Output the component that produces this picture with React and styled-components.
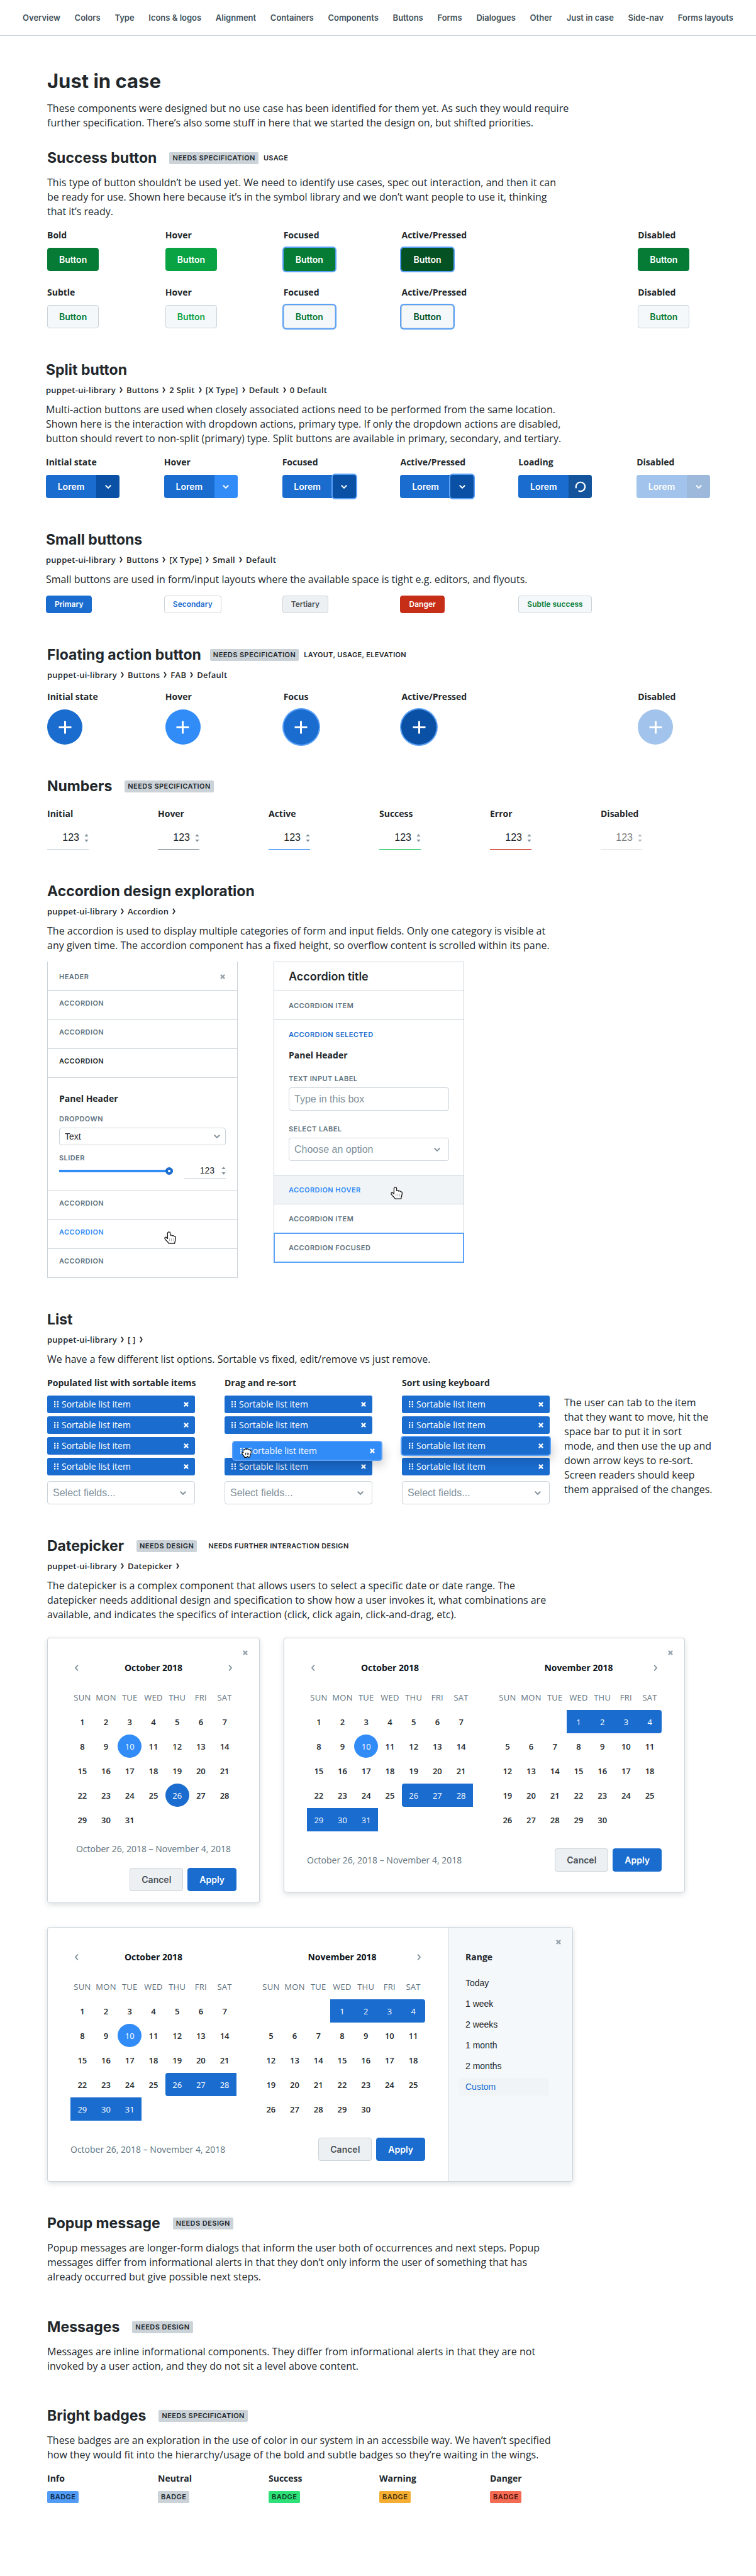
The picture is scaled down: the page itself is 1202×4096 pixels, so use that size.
import React from "react";
import styled, { createGlobalStyle, css } from "styled-components";

const c = {
  ink: "#22272b",
  nav: "#40505a",
  slate: "#5e727e",
  muted: "#81919c",
  line: "#cbd3d9",
  lineDark: "#aeb9c2",
  mist: "#f4f8fb",
  fog: "#ecf0f3",
  hover: "#f0f4f7",
  blue: "#1a6ccf",
  blueLight: "#318cf7",
  blueDark: "#0a50a4",
  ring: "#5aa1f7",
  green: "#067b36",
  greenLight: "#0aa344",
  greenDark: "#045123",
  red: "#c72e18",
};

const heading = `Inter, "Liberation Sans", sans-serif`;
const body = `"Open Sans", "Noto Sans", sans-serif`;
const field = `"Liberation Sans", Arial, sans-serif`;

const GlobalStyle = createGlobalStyle`
  *, *::before, *::after { box-sizing: border-box; }
  body { margin: 0; background: #fff; color: ${c.ink}; font-family: ${body}; }
  h1, h2, h3, p, ul, ol { margin: 0; padding: 0; }
  ul, ol { list-style: none; }
  button, input, select { margin: 0; font: inherit; color: inherit; }
`;

/* ---------- page frame ---------- */

const Nav = styled.nav`
  display: flex;
  align-items: center;
  justify-content: space-between;
  height: 57px;
  padding: 0 36px;
  border-bottom: 1px solid ${c.line};
`;

const NavLink = styled.a`
  font: 600 13px/20px ${heading};
  color: ${c.nav};
  text-decoration: none;
  white-space: nowrap;
`;

const Main = styled.main`
  display: flex;
  flex-direction: column;
  gap: 52px;
  padding: 52px 0 118px;
`;

const Section = styled.section`
  padding-left: ${(p) => (p.$outdent ? 73 : 75)}px;
  padding-right: ${(p) => (p.$outdent ? 2 : 0)}px;
`;

const PageTitle = styled.h1`
  font: 700 31px/40px ${heading};
  margin-bottom: 12px;
`;

const Title = styled.h2`
  font: 700 23px/28px ${heading};
  white-space: nowrap;
`;

const TitleRow = styled.div`
  display: flex;
  align-items: center;
  gap: ${(p) => (p.$tight ? 14 : 20)}px;
`;

const Tags = styled.div`
  display: flex;
  align-items: center;
  gap: ${(p) => (p.$wide ? 18 : 8)}px;
`;

const Badge = styled.span`
  display: inline-block;
  padding: 0 5px;
  border-radius: 2px;
  background: ${(p) => p.$bg || c.line};
  color: ${(p) => p.$fg || c.ink};
  font: 600 11px/19px ${heading};
  letter-spacing: 0.04em;
  white-space: nowrap;
`;

const TagNote = styled.span`
  font: 600 11px/19px ${heading};
  letter-spacing: 0.03em;
`;

const Crumbs = styled.p`
  display: flex;
  align-items: center;
  gap: 6px;
  margin-top: 9px;
  font: 600 13px/18px ${body};
  letter-spacing: 0.02em;
`;

const Copy = styled.p`
  max-width: ${(p) => p.$width || 816}px;
  margin-top: ${(p) => p.$top ?? 11}px;
  margin-bottom: ${(p) => p.$bottom ?? 0}px;
  font-size: 16px;
  line-height: 23px;
`;

const States = styled.div`
  display: grid;
  grid-template-columns: repeat(6, ${(p) => (p.$compact ? "176px" : "1fr")});
  margin-top: ${(p) => p.$top ?? 16}px;
`;

const State = styled.div`
  display: flex;
  flex-direction: column;
  align-items: flex-start;
  gap: 10px;
  grid-column-start: ${(p) => p.$col || "auto"};
`;

const Label = styled.h3`
  font: 700 14px/20px ${body};
  white-space: nowrap;
`;

/* ---------- buttons ---------- */

const focusRing = css`
  box-shadow: 0 0 0 2px ${c.ring};
`;

const Button = styled.button`
  height: 37px;
  padding: 0 18px;
  border: 1px solid ${(p) => p.$border || p.$bg};
  border-radius: 4px;
  background: ${(p) => p.$bg};
  color: ${(p) => p.$fg || "#fff"};
  font: 600 14px/20px ${heading};
  ${(p) => p.$ring && focusRing}
`;

const SmallButton = styled(Button)`
  height: 28px;
  padding: 0 13px;
  font-size: 12px;
  line-height: 16px;
`;

const Split = styled.div`
  display: flex;
  width: 117px;
  height: 37px;
  opacity: ${(p) => (p.$dim ? 0.4 : 1)};
`;

const SplitMain = styled.button`
  flex: 1;
  padding: 0;
  border: 0;
  border-radius: 4px 0 0 4px;
  background: ${c.blue};
  color: #fff;
  font: 600 14px/20px ${heading};
`;

const SplitMore = styled.button`
  display: grid;
  place-items: center;
  width: 37px;
  padding: 0;
  border: 0;
  border-radius: ${(p) => (p.$ring ? "4px" : "0 4px 4px 0")};
  background: ${(p) => p.$bg || c.blueDark};
  color: #fff;
  ${(p) => p.$ring && focusRing}
`;

const Fab = styled.button`
  display: grid;
  place-items: center;
  width: 56px;
  height: 56px;
  padding: 0;
  border: 0;
  border-radius: 50%;
  background: ${(p) => p.$bg};
  color: #fff;
  opacity: ${(p) => (p.$dim ? 0.4 : 1)};
  ${(p) => p.$ring && focusRing}
`;

/* ---------- icons ---------- */

const Svg = styled.svg`
  display: block;
  flex: none;
`;

const ChevronDown = () => (
  <Svg width="10" height="10" viewBox="0 0 10 10" fill="none" stroke="currentColor" strokeWidth="2" strokeLinecap="round" aria-hidden="true">
    <path d="M1.3 3.2 5 6.900l3.700-3.700" />
  </Svg>
);

const ChevronSide = ({ flip }) => (
  <Svg width="7" height="10" viewBox="0 0 7 10" fill="none" stroke="currentColor" strokeWidth="1.800" strokeLinecap="round" aria-hidden="true">
    <path d={flip ? "M5.4 1.2 2 5l3.4 3.8" : "M1.6 1.2 5 5 1.6 8.8"} />
  </Svg>
);

const CrumbArrow = () => (
  <Svg width="5" height="10" viewBox="0 0 5 10" fill="none" stroke="currentColor" strokeWidth="1.800" aria-hidden="true">
    <path d="M1 0.800 3.800 5 1 9.200" />
  </Svg>
);

const Cross = () => (
  <Svg width="8" height="8" viewBox="0 0 8 8" fill="none" stroke="currentColor" strokeWidth="2.200" aria-hidden="true">
    <path d="M.9.9l6.200 6.200M7.100.9.9 7.100" />
  </Svg>
);

const Plus = () => (
  <Svg width="21" height="21" viewBox="0 0 21 21" fill="none" stroke="currentColor" strokeWidth="3" aria-hidden="true">
    <path d="M10.5 0.5v20M0.5 10.5h20" />
  </Svg>
);

const Spinner = () => (
  <Svg width="18" height="18" viewBox="0 0 18 18" fill="none" stroke="currentColor" strokeWidth="2.200" strokeLinecap="round" aria-hidden="true">
    <path d="M1.9 10.400A7.200 7.200 0 1 1 6.400 15.700" />
  </Svg>
);

const Grip = () => (
  <Svg width="7" height="10" viewBox="0 0 7 10" fill="currentColor" aria-hidden="true">
    {[0, 3.6, 7.2].map((y) => (
      <React.Fragment key={y}>
        <rect x="0" y={y} width="2.3" height="2.3" />
        <rect x="4.7" y={y} width="2.3" height="2.3" />
      </React.Fragment>
    ))}
  </Svg>
);

const Hand = () => (
  <Svg width="19" height="20" viewBox="0 0 19 20" fill="#fff" stroke="#16181a" strokeWidth="1.300" strokeLinejoin="round" aria-hidden="true">
    <path d="M5.400 11.400V3c0-2.800 4.200-2.800 4.200 0v3.200c1.400-.8 3-.2 3.200.8 1.400-.6 2.800-.2 3.200 1 1.400-.2 2.400.4 2.400 1.800 0 3-1.200 5.800-1.800 9.400H7.400C6 16.200 1 13.400.9 10.800c0-1.800 2.200-2.200 3.200-.6z" />
    <path d="M8.600 11.200v4.200M11.600 11.200v4.200M14.600 11.200v4.200" stroke="#777" strokeWidth=".6" fill="none" />
  </Svg>
);

const GrabHand = () => (
  <Svg width="16" height="15" viewBox="0 0 16 15" fill="#fff" stroke="#111" strokeWidth="1.200" strokeLinejoin="round" aria-hidden="true">
    <path d="M2.800 6.400C2 3.800 2.200 2 3.800 2c.6 0 1 .2 1.200.8C5 .6 7.600.2 8 1.800c.6-1.400 3-1.200 3 .6 1-.8 2.600-.2 2.600 1.200 1.200-.4 1.800.4 1.800 1.800 0 2.800-1.800 4.800-2.200 8.400l-2.400.4-1.200-1.600-1.200 1.800H4.800c-.2-2-1.600-2.800-2.800-4.400C.2 8 .2 6.200 2.800 6.400z" />
    <path d="M6.600 6.800v3.800M9.200 6.800v3.800M11.600 6.800v3.800" strokeWidth=".9" fill="none" />
  </Svg>
);

const Steppers = () => (
  <Svg width="7" height="13" viewBox="0 0 7 13" fill={c.muted} aria-hidden="true">
    <path d="M3.500 0.300 6.700 4H.3zM3.500 12.700 6.700 9H.3z" />
  </Svg>
);

/* ---------- numbers ---------- */

const NumberBox = styled.label`
  display: flex;
  align-items: center;
  justify-content: flex-end;
  gap: ${(p) => (p.$short ? 11 : 8)}px;
  width: 66px;
  height: ${(p) => (p.$short ? 25 : 37)}px;
  border-bottom: 1px solid ${(p) => p.$line || c.line};
  opacity: ${(p) => (p.$dim ? 0.6 : 1)};
`;

const NumberInput = styled.input`
  width: 40px;
  padding: 0;
  border: 0;
  background: transparent;
  text-align: right;
  font: ${(p) => (p.$short ? 14 : 16)}px/20px ${field};
`;

const Num = ({ name, line, dim, short }) => (
  <NumberBox $line={line} $dim={dim} $short={short}>
    <NumberInput type="text" inputMode="numeric" defaultValue="123" aria-label={name} disabled={dim} $short={short} />
    <Steppers />
  </NumberBox>
);

/* ---------- form fields ---------- */

const SelectWrap = styled.div`
  display: grid;
  grid-template-columns: 1fr 10px;
  align-items: center;
  width: 100%;
  height: ${(p) => (p.$short ? 28 : 37)}px;
  padding-right: ${(p) => (p.$short ? 8 : 13)}px;
  border: 1px solid ${c.line};
  border-radius: 4px;
  color: ${c.muted};
  background: #fff;

  svg { grid-area: 1 / 2; pointer-events: none; }
`;

const Select = styled.select`
  grid-area: 1 / 1 / 2 / 3;
  width: 100%;
  height: 100%;
  padding: 0 8px;
  border: 0;
  appearance: none;
  background: transparent;
  color: ${(p) => (p.$short ? c.ink : c.muted)};
  font: ${(p) => (p.$short ? 14 : 16)}px/20px ${field};
`;

const SelectField = ({ id, name, text, short }) => (
  <SelectWrap $short={short}>
    <Select id={id} aria-label={name} $short={short}>
      <option>{text}</option>
    </Select>
    <ChevronDown />
  </SelectWrap>
);

const TextInput = styled.input`
  width: 100%;
  height: 37px;
  padding: 0 8px;
  border: 1px solid ${c.line};
  border-radius: 4px;
  font: 16px/20px ${field};
  &::placeholder { color: ${c.muted}; opacity: 1; }
`;

const capsText = css`
  font: 600 11px/16px ${heading};
  letter-spacing: 0.04em;
`;

const FieldLabel = styled.label`
  display: block;
  margin-top: ${(p) => p.$top}px;
  margin-bottom: ${(p) => p.$bottom}px;
  color: ${c.slate};
  ${capsText}
`;

/* ---------- accordion ---------- */

const Accordions = styled.div`
  display: flex;
  align-items: flex-start;
  gap: 57px;
  margin-top: 14px;
`;

const Accordion = styled.div`
  width: 303px;
  border: solid ${c.line};
  border-width: ${(p) => (p.$open ? "0 1px" : "1px 1px 0")};
`;

const AccHeader = styled.div`
  display: flex;
  align-items: center;
  justify-content: space-between;
  height: 47px;
  padding: 2px 19px 0 18px;
  border-bottom: 1px solid ${c.lineDark};
  color: ${c.slate};
  ${capsText}
`;

const AccTitle = styled.h3`
  height: 46px;
  padding-left: 23px;
  border-bottom: 1px solid ${c.line};
  font: 600 18px/46px ${heading};
`;

const AccRow = styled.button`
  position: relative;
  display: flex;
  align-items: center;
  width: 100%;
  height: 46px;
  padding: ${(p) => (p.$raised ? "0 18px 8px" : "0 23px")};
  border: 0;
  border-bottom: 1px solid ${c.line};
  background: ${(p) => p.$bg || "#fff"};
  color: ${(p) => p.$fg || c.slate};
  text-align: left;
  ${capsText}
  ${(p) => p.$plain && css`border-bottom: 0;`}
  ${(p) => p.$focus && css`border-bottom: 0; outline: 2px solid ${c.ring}; outline-offset: -1px;`}
`;

const Cursor = styled.span`
  position: absolute;
  left: 185px;
  top: 18px;
`;

const CloseButton = styled.button`
  display: grid;
  place-items: center;
  padding: 0;
  border: 0;
  background: none;
  color: #96a3ad;
`;

const PanelTitle = styled.h3`
  font: 700 14px/20px ${body};
`;

const LeftPanel = styled.div`
  height: 180px;
  padding: 23px 18px 0;
  border-bottom: 1px solid ${c.line};
`;

const RightPanel = styled.div`
  height: 201px;
  padding: 0 23px;
  border-bottom: 1px solid ${c.line};
`;

const SliderRow = styled.div`
  display: flex;
  align-items: center;
  justify-content: space-between;
`;

const Slider = styled.input`
  appearance: none;
  width: 181px;
  height: 12px;
  background: linear-gradient(${c.blueLight}, ${c.blueLight}) center / 100% 4px no-repeat;
  border-radius: 4px;

  &::-webkit-slider-thumb {
    appearance: none;
    width: 12px;
    height: 12px;
    border: 4px solid ${c.blue};
    border-radius: 50%;
    background: #fff;
  }
`;

/* ---------- sortable list ---------- */

const Lists = styled.div`
  display: grid;
  grid-template-columns: 282px 282px 258px 1fr;
  margin-top: 16px;
`;

const ListColumn = styled.div`
  width: 235px;
`;

const Items = styled.ul`
  display: flex;
  flex-direction: column;
  gap: 5px;
  margin: 10px 0 9px;
`;

const Item = styled.li`
  position: relative;
  display: flex;
  align-items: center;
  gap: 5px;
  height: 28px;
  padding: 0 10px 0 11px;
  border-radius: 3px;
  background: ${c.blue};
  color: #fff;
  font-size: 14px;
  line-height: 20px;
  ${(p) => p.$lifted && css`
    z-index: 1;
    box-shadow: 0 0 0 2px ${c.ring}, 4px 8px 16px rgba(0, 0, 0, 0.2);
  `}
  ${(p) => p.$dragged && css`
    left: 14px;
    top: 8px;
    background: ${c.blueLight};
  `}
`;

const ItemText = styled.span`
  flex: 1;
`;

const ItemRemove = styled(CloseButton)`
  color: #fff;
`;

const GrabCursor = styled.span`
  position: absolute;
  left: 13px;
  top: 10px;
`;

const SideNote = styled.p`
  max-width: 238px;
  padding-top: 30px;
  font-size: 16px;
  line-height: 23px;
`;

/* ---------- datepicker ---------- */

const Pickers = styled.div`
  display: flex;
  flex-wrap: wrap;
  align-items: flex-start;
  gap: 38px;
  margin-top: 25px;
`;

const Picker = styled.div`
  position: relative;
  display: flex;
  border: 1px solid ${c.line};
  border-radius: 4px;
  background: #fff;
  box-shadow: 0 3px 8px rgba(60, 80, 95, 0.18);
`;

const PickerBody = styled.div`
  padding: 37px 36px ${(p) => (p.$single ? 18 : 32)}px;
`;

const Months = styled.div`
  display: flex;
  gap: 36px;
`;

const Month = styled.div`
  width: 264px;
`;

const MonthBar = styled.div`
  display: grid;
  grid-template-columns: 20px 1fr 20px;
  align-items: center;
  height: 20px;
  padding: 0 6px;
`;

const MonthName = styled.h3`
  grid-column: 2;
  text-align: center;
  font: 700 14px/20px ${body};
  color: #0d141c;
`;

const MonthButton = styled(CloseButton)`
  grid-row: 1;
  grid-column: ${(p) => (p.$next ? 3 : 1)};
  justify-self: ${(p) => (p.$next ? "end" : "start")};
  color: ${c.muted};
`;

const Calendar = styled.table`
  width: 100%;
  margin-top: 25px;
  border-collapse: separate;
  border-spacing: 0 2px;
  table-layout: fixed;
`;

const Weekday = styled.th`
  height: 28px;
  padding: 0;
  vertical-align: top;
  font: 400 13px/20px ${body};
  letter-spacing: 0.02em;
  color: ${c.slate};
`;

const Day = styled.td`
  height: 37px;
  padding: 0;
  text-align: center;
  font: ${(p) => (p.$fill ? 400 : 600)} 13px/18px ${body};
  color: ${(p) => (p.$fill ? "#fff" : c.ink)};
  background: ${(p) => p.$fill || "transparent"};
  border-radius: ${(p) => p.$radius || "0"};
`;

const PickerFooter = styled.div`
  display: flex;
  flex-direction: ${(p) => (p.$single ? "column" : "row")};
  align-items: ${(p) => (p.$single ? "stretch" : "center")};
  justify-content: space-between;
  margin-top: ${(p) => (p.$single ? 16 : 25)}px;
`;

const RangeText = styled.p`
  font-size: 14px;
  line-height: 20px;
  text-align: ${(p) => (p.$single ? "center" : "left")};
  margin-bottom: ${(p) => (p.$single ? 20 : 0)}px;
  color: ${c.slate};
`;

const Actions = styled.div`
  display: flex;
  justify-content: flex-end;
  gap: 7px;
`;

const PickerClose = styled(CloseButton)`
  position: absolute;
  top: 19px;
  right: 18px;
`;

const RangeSide = styled.aside`
  width: 198px;
  padding: 37px 38px 0 17px;
  border-left: 1px solid ${c.line};
  border-radius: 0 4px 4px 0;
  background: ${c.mist};
`;

const RangeTitle = styled.h3`
  padding-left: 10px;
  margin-bottom: 17px;
  font: 700 14px/20px ${body};
`;

const RangeOption = styled.button`
  display: block;
  width: 100%;
  height: 28px;
  margin-bottom: 5px;
  padding: 0 10px;
  border: 0;
  background: ${(p) => (p.$on ? c.hover : "transparent")};
  color: ${(p) => (p.$on ? c.blue : c.ink)};
  text-align: left;
  font: 14px/20px ${field};
`;

/* ---------- data and composite parts ---------- */

const NAV = ["Overview", "Colors", "Type", "Icons & logos", "Alignment", "Containers", "Components", "Buttons", "Forms", "Dialogues", "Other", "Just in case", "Side-nav", "Forms layouts"];
const DAYS = ["SUN", "MON", "TUE", "WED", "THU", "FRI", "SAT"];

const Heading = ({ title, tag, note, tight, wide }) => (
  <TitleRow $tight={tight}>
    <Title>{title}</Title>
    {tag && (
      <Tags $wide={wide}>
        <Badge>{tag}</Badge>
        {note && <TagNote>{note}</TagNote>}
      </Tags>
    )}
  </TitleRow>
);

const Path = ({ parts, open }) => (
  <Crumbs>
    {parts.map((part, i) => (
      <React.Fragment key={part}>
        {i > 0 && <CrumbArrow />}
        <span>{part}</span>
      </React.Fragment>
    ))}
    {open && <CrumbArrow />}
  </Crumbs>
);

const weeks = (offset, count) => {
  const cells = [...Array(offset).fill(null), ...Array.from({ length: count }, (_, i) => i + 1)];
  while (cells.length < 35) cells.push(null);
  return [0, 1, 2, 3, 4].map((w) => cells.slice(w * 7, w * 7 + 7));
};

const MonthView = ({ name, offset, count, mark, prev, next }) => (
  <Month>
    <MonthBar>
      {prev && <MonthButton aria-label="Previous month"><ChevronSide flip /></MonthButton>}
      <MonthName>{name}</MonthName>
      {next && <MonthButton $next aria-label="Next month"><ChevronSide /></MonthButton>}
    </MonthBar>
    <Calendar>
      <thead>
        <tr>{DAYS.map((d) => <Weekday key={d} scope="col">{d}</Weekday>)}</tr>
      </thead>
      <tbody>
        {weeks(offset, count).map((week, w) => (
          <tr key={w}>
            {week.map((d, i) => {
              const m = d ? mark(d) : null;
              return <Day key={i} $fill={m?.fill} $radius={m?.radius}>{d}</Day>;
            })}
          </tr>
        ))}
      </tbody>
    </Calendar>
  </Month>
);

const today = { fill: c.blueLight, radius: "50%" };
const markSingle = (d) => (d === 10 ? today : d === 26 ? { fill: c.blue, radius: "50%" } : null);
const markOctober = (d) => (d === 10 ? today : d >= 26 ? { fill: c.blue, radius: d === 26 ? "4px 0 0 4px" : "0" } : null);
const markNovember = (d) => (d <= 4 ? { fill: c.blue, radius: d === 4 ? "0 4px 4px 0" : "0" } : null);

const Footer = ({ single }) => (
  <PickerFooter $single={single}>
    <RangeText $single={single}>October 26, 2018 – November 4, 2018</RangeText>
    <Actions>
      <Button $bg={c.fog} $border={c.line} $fg="#4a5157">Cancel</Button>
      <Button $bg={c.blue}>Apply</Button>
    </Actions>
  </PickerFooter>
);

const TwoMonths = () => (
  <PickerBody>
    <Months>
      <MonthView name="October 2018" offset={0} count={31} mark={markOctober} prev />
      <MonthView name="November 2018" offset={3} count={30} mark={markNovember} next />
    </Months>
    <Footer />
  </PickerBody>
);

const SortList = ({ title, id, special }) => (
  <ListColumn>
    <Label>{title}</Label>
    <Items>
      {[0, 1, 2, 3].map((i) => (
        <Item key={i} $lifted={special && i === 2} $dragged={special === "drag" && i === 2}>
          <Grip />
          <ItemText>Sortable list item</ItemText>
          <ItemRemove aria-label="Remove item"><Cross /></ItemRemove>
          {special === "drag" && i === 2 && <GrabCursor><GrabHand /></GrabCursor>}
        </Item>
      ))}
    </Items>
    <SelectField id={id} name={title} text="Select fields..." />
  </ListColumn>
);

const bold = [
  ["Bold", c.green],
  ["Hover", c.greenLight],
  ["Focused", c.green, true],
  ["Active/Pressed", c.greenDark, true],
  ["Disabled", c.green, false, 6],
];
const subtle = [["Subtle", ...bold[0].slice(1)], ...bold.slice(1)];

const splits = [
  { name: "Initial state" },
  { name: "Hover", bg: c.blueLight },
  { name: "Focused", ring: true },
  { name: "Active/Pressed", ring: true },
  { name: "Loading", bg: "#13549c", loading: true },
  { name: "Disabled", dim: true },
];

const smalls = [
  { text: "Primary", bg: c.blue },
  { text: "Secondary", bg: "#fff", border: c.line, fg: c.blue },
  { text: "Tertiary", bg: c.fog, border: c.line, fg: "#4a5157" },
  { text: "Danger", bg: c.red },
  { text: "Subtle success", bg: c.mist, border: c.line, fg: c.green },
];

const fabs = [
  { name: "Initial state", bg: c.blue },
  { name: "Hover", bg: c.blueLight },
  { name: "Focus", bg: c.blue, ring: true },
  { name: "Active/Pressed", bg: c.blueDark, ring: true },
  { name: "Disabled", bg: c.blue, dim: true, col: 6 },
];

const numbers = [
  ["Initial", c.line],
  ["Hover", "#7f8d98"],
  ["Active", "#318cf7"],
  ["Success", "#1dc45c"],
  ["Error", c.red],
  ["Disabled", c.line, true],
];

const badges = [
  ["Info", "#529cf5", "#0b2747"],
  ["Neutral", c.line, c.ink],
  ["Success", "#2de078", "#0b3d1f"],
  ["Warning", "#f5ae31", "#46300a"],
  ["Danger", "#f46b54", "#4d120a"],
];

export default function App() {
  return (
    <>
      <GlobalStyle />
      <Nav aria-label="Sections">
        {NAV.map((n) => <NavLink key={n} href="#">{n}</NavLink>)}
      </Nav>
      <Main>
        <Section>
          <PageTitle>Just in case</PageTitle>
          <Copy $top={0} $bottom={30} $width={850}>
            These components were designed but no use case has been identified for them yet. As such they would require further specification. There’s also some stuff in here that we started the design on, but shifted priorities.
          </Copy>
          <Heading title="Success button" tag="NEEDS SPECIFICATION" note="USAGE" />
          <Copy $top={14}>
            This type of button shouldn’t be used yet. We need to identify use cases, spec out interaction, and then it can be ready for use. Shown here because it’s in the symbol library and we don’t want people to use it, thinking that it’s ready.
          </Copy>
          <States>
            {bold.map(([name, bg, ring, col]) => (
              <State key={name} $col={col}>
                <Label>{name}</Label>
                <Button $bg={bg} $ring={ring}>Button</Button>
              </State>
            ))}
          </States>
          <States $top={24}>
            {subtle.map(([name, fg, ring, col]) => (
              <State key={name} $col={col}>
                <Label>{name}</Label>
                <Button $bg={c.mist} $border={c.line} $fg={fg} $ring={ring}>Button</Button>
              </State>
            ))}
          </States>
        </Section>

        <Section $outdent>
          <Heading title="Split button" />
          <Path parts={["puppet-ui-library", "Buttons", "2 Split", "[X Type]", "Default", "0 Default"]} />
          <Copy $width={850}>
            Multi-action buttons are used when closely associated actions need to be performed from the same location. Shown here is the interaction with dropdown actions, primary type. If only the dropdown actions are disabled, button should revert to non-split (primary) type. Split buttons are available in primary, secondary, and tertiary.
          </Copy>
          <States>
            {splits.map((s) => (
              <State key={s.name}>
                <Label>{s.name}</Label>
                <Split $dim={s.dim}>
                  <SplitMain>Lorem</SplitMain>
                  <SplitMore $bg={s.bg} $ring={s.ring} aria-label="More actions">
                    {s.loading ? <Spinner /> : <ChevronDown />}
                  </SplitMore>
                </Split>
              </State>
            ))}
          </States>
        </Section>

        <Section $outdent>
          <Heading title="Small buttons" />
          <Path parts={["puppet-ui-library", "Buttons", "[X Type]", "Small", "Default"]} />
          <Copy $width={850}>Small buttons are used in form/input layouts where the available space is tight e.g. editors, and flyouts.</Copy>
          <States $top={14}>
            {smalls.map((s) => (
              <State key={s.text}>
                <SmallButton $bg={s.bg} $border={s.border} $fg={s.fg}>{s.text}</SmallButton>
              </State>
            ))}
          </States>
        </Section>

        <Section>
          <Heading title="Floating action button" tag="NEEDS SPECIFICATION" note="LAYOUT, USAGE, ELEVATION" tight />
          <Path parts={["puppet-ui-library", "Buttons", "FAB", "Default"]} />
          <States>
            {fabs.map((f) => (
              <State key={f.name} $col={f.col}>
                <Label>{f.name}</Label>
                <Fab $bg={f.bg} $ring={f.ring} $dim={f.dim} aria-label="Add"><Plus /></Fab>
              </State>
            ))}
          </States>
        </Section>

        <Section>
          <Heading title="Numbers" tag="NEEDS SPECIFICATION" />
          <States $compact $top={20}>
            {numbers.map(([name, line, dim]) => (
              <State key={name}>
                <Label>{name}</Label>
                <Num name={name} line={line} dim={dim} />
              </State>
            ))}
          </States>
        </Section>

        <Section>
          <Heading title="Accordion design exploration" />
          <Path parts={["puppet-ui-library", "Accordion"]} open />
          <Copy>
            The accordion is used to display multiple categories of form and input fields. Only one category is visible at any given time. The accordion component has a fixed height, so overflow content is scrolled within its pane.
          </Copy>
          <Accordions>
            <Accordion $open>
              <AccHeader>
                HEADER
                <CloseButton aria-label="Close"><Cross /></CloseButton>
              </AccHeader>
              <AccRow $raised>ACCORDION</AccRow>
              <AccRow $raised>ACCORDION</AccRow>
              <AccRow $raised $fg={c.ink}>ACCORDION</AccRow>
              <LeftPanel>
                <PanelTitle>Panel Header</PanelTitle>
                <FieldLabel htmlFor="dropdown" $top={14} $bottom={6}>DROPDOWN</FieldLabel>
                <SelectField id="dropdown" text="Text" short />
                <FieldLabel htmlFor="slider" $top={12} $bottom={0}>SLIDER</FieldLabel>
                <SliderRow>
                  <Slider id="slider" type="range" min="0" max="123" defaultValue="123" />
                  <Num name="Slider value" short />
                </SliderRow>
              </LeftPanel>
              <AccRow $raised>ACCORDION</AccRow>
              <AccRow $raised $fg={c.blueLight}>
                ACCORDION
                <Cursor><Hand /></Cursor>
              </AccRow>
              <AccRow $raised>ACCORDION</AccRow>
            </Accordion>
            <Accordion>
              <AccTitle>Accordion title</AccTitle>
              <AccRow>ACCORDION ITEM</AccRow>
              <AccRow $plain $fg={c.blue}>ACCORDION SELECTED</AccRow>
              <RightPanel>
                <PanelTitle>Panel Header</PanelTitle>
                <FieldLabel htmlFor="text-input" $top={19} $bottom={6}>TEXT INPUT LABEL</FieldLabel>
                <TextInput id="text-input" type="text" placeholder="Type in this box" />
                <FieldLabel htmlFor="select-input" $top={21} $bottom={6}>SELECT LABEL</FieldLabel>
                <SelectField id="select-input" text="Choose an option" />
              </RightPanel>
              <AccRow $bg={c.hover} $fg={c.blueLight}>
                ACCORDION HOVER
                <Cursor><Hand /></Cursor>
              </AccRow>
              <AccRow>ACCORDION ITEM</AccRow>
              <AccRow $focus>ACCORDION FOCUSED</AccRow>
            </Accordion>
          </Accordions>
        </Section>

        <Section>
          <Heading title="List" />
          <Path parts={["puppet-ui-library", "[ ]"]} open />
          <Copy>We have a few different list options. Sortable vs fixed, edit/remove vs just remove.</Copy>
          <Lists>
            <SortList id="fields-populated" title="Populated list with sortable items" />
            <SortList id="fields-drag" title="Drag and re-sort" special="drag" />
            <SortList id="fields-keyboard" title="Sort using keyboard" special="keyboard" />
            <SideNote>
              The user can tab to the item that they want to move, hit the space bar to put it in sort mode, and then use the up and down arrow keys to re-sort. Screen readers should keep them appraised of the changes.
            </SideNote>
          </Lists>
        </Section>

        <Section>
          <Heading title="Datepicker" tag="NEEDS DESIGN" note="NEEDS FURTHER INTERACTION DESIGN" wide />
          <Path parts={["puppet-ui-library", "Datepicker"]} open />
          <Copy>
            The datepicker is a complex component that allows users to select a specific date or date range. The datepicker needs additional design and specification to show how a user invokes it, what combinations are available, and indicates the specifics of interaction (click, click again, click-and-drag, etc).
          </Copy>
          <Pickers>
            <Picker>
              <PickerBody $single>
                <MonthView name="October 2018" offset={0} count={31} mark={markSingle} prev next />
                <Footer single />
              </PickerBody>
              <PickerClose aria-label="Close"><Cross /></PickerClose>
            </Picker>
            <Picker>
              <TwoMonths />
              <PickerClose aria-label="Close"><Cross /></PickerClose>
            </Picker>
            <Picker>
              <TwoMonths />
              <RangeSide>
                <RangeTitle>Range</RangeTitle>
                {["Today", "1 week", "2 weeks", "1 month", "2 months", "Custom"].map((r) => (
                  <RangeOption key={r} $on={r === "Custom"}>{r}</RangeOption>
                ))}
              </RangeSide>
              <PickerClose aria-label="Close"><Cross /></PickerClose>
            </Picker>
          </Pickers>
        </Section>

        <Section>
          <Heading title="Popup message" tag="NEEDS DESIGN" />
          <Copy $top={14} $bottom={2}>
            Popup messages are longer-form dialogs that inform the user both of occurrences and next steps. Popup messages differ from informational alerts in that they don’t only inform the user of something that has already occurred but give possible next steps.
          </Copy>
        </Section>

        <Section>
          <Heading title="Messages" tag="NEEDS DESIGN" />
          <Copy $top={14} $bottom={1}>
            Messages are inline informational components. They differ from informational alerts in that they are not invoked by a user action, and they do not sit a level above content.
          </Copy>
        </Section>

        <Section>
          <Heading title="Bright badges" tag="NEEDS SPECIFICATION" />
          <Copy $top={14}>
            These badges are an exploration in the use of color in our system in an accessbile way. We haven’t specified how they would fit into the hierarchy/usage of the bold and subtle badges so they’re waiting in the wings.
          </Copy>
          <States $compact>
            {badges.map(([name, bg, fg]) => (
              <State key={name}>
                <Label>{name}</Label>
                <Badge $bg={bg} $fg={fg}>BADGE</Badge>
              </State>
            ))}
          </States>
        </Section>
      </Main>
    </>
  );
}
